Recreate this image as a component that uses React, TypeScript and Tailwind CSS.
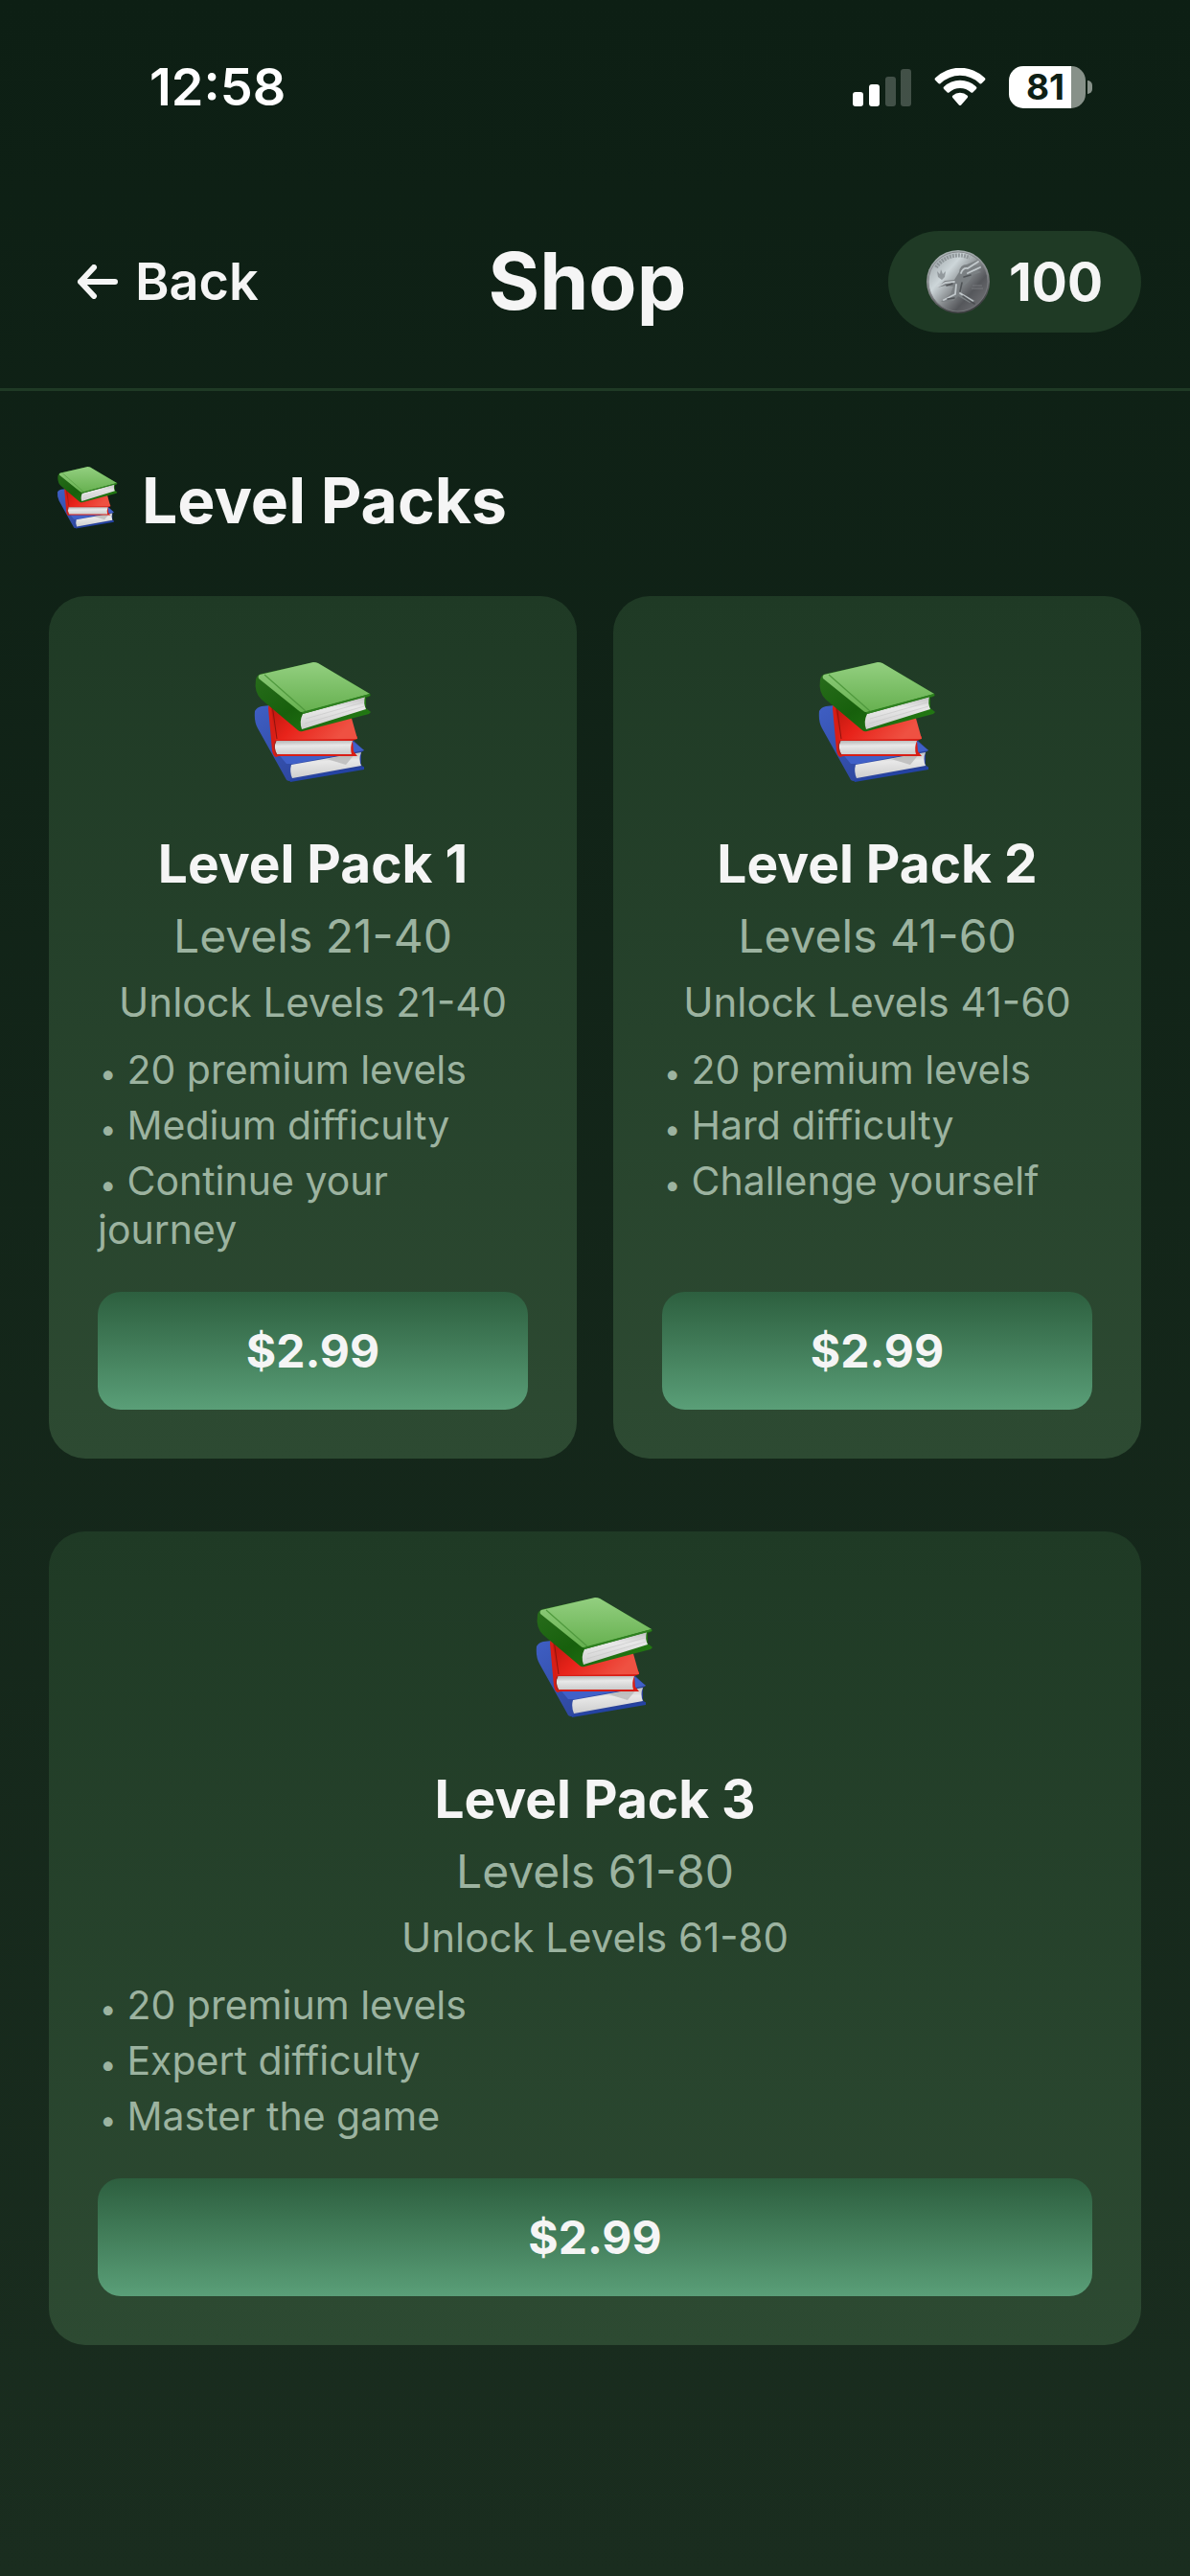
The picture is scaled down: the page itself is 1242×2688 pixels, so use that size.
import React, { useState } from 'react';

const PACKS = [
  { id: 1, title: 'Level Pack 1', range: '21-40', features: ['20 premium levels', 'Medium difficulty', 'Continue your journey'], price: '$2.99' },
  { id: 2, title: 'Level Pack 2', range: '41-60', features: ['20 premium levels', 'Hard difficulty', 'Challenge yourself'], price: '$2.99' },
  { id: 3, title: 'Level Pack 3', range: '61-80', features: ['20 premium levels', 'Expert difficulty', 'Master the game'], price: '$2.99', wide: true },
];

const Books = ({ className }) => (
  <svg className={className} viewBox="0 0 124 126" aria-hidden="true">
    <defs>
      <linearGradient id="greenTop" x1="0.5" y1="0" x2="0.5" y2="1">
        <stop offset="0" stopColor="#93cf80" />
        <stop offset="1" stopColor="#66b04f" />
      </linearGradient>
      <linearGradient id="greenSpine" x1="0" y1="0" x2="1" y2="1">
        <stop offset="0" stopColor="#2c6f1f" />
        <stop offset="0.5" stopColor="#17600c" />
        <stop offset="1" stopColor="#268015" />
      </linearGradient>
      <linearGradient id="redTop" x1="0" y1="0" x2="1" y2="0.4">
        <stop offset="0" stopColor="#b5150b" />
        <stop offset="0.45" stopColor="#e8231a" />
        <stop offset="1" stopColor="#ef5142" />
      </linearGradient>
      <linearGradient id="blueSpine" x1="0" y1="0" x2="1" y2="1">
        <stop offset="0" stopColor="#3f5fc4" />
        <stop offset="1" stopColor="#263c8e" />
      </linearGradient>
      <linearGradient id="pages" x1="0" y1="0" x2="0.1" y2="1">
        <stop offset="0" stopColor="#b4b4b4" />
        <stop offset="0.4" stopColor="#e8e8e8" />
        <stop offset="1" stopColor="#cecece" />
      </linearGradient>
    </defs>

    <path d="M1 51 Q3 47 8 46 L26 44 L102 80 L115 92 L112 94 L112 107 L115 110 L37 124 Q34 124 33 121 L4 69 Q0 62 1 51 Z" fill="url(#blueSpine)" />
    <path d="M24 94 L98 82 L104 83 L115 92 L42 106 L34 106 Z" fill="#4060c8" />
    <path d="M39 107 L112 94 Q109 101 112 108 L40 121 Q37 114 39 107 Z" fill="url(#pages)" />
    <path d="M76 101 L106 95 L96 107 Z" fill="#b2b2b2" opacity="0.7" />
    <path d="M37 123 L115 109 L115 112 L38 125 Z" fill="#2443a4" />

    <path d="M16 39 L90 57 L108 78 L108 80 L103 82 L104 93 L108 98 L26 98 L23 99 Q20 98 19 92 L15 48 Z" fill="#d81e16" />
    <path d="M17 40 L101 55 L108 80 L22 81 Z" fill="url(#redTop)" />
    <path d="M19 44 L24 80" stroke="#8f140e" strokeWidth="1" fill="none" />
    <path d="M23 82 L103 82 Q100 89 102 96 L24 96 Q20 89 23 82 Z" fill="url(#pages)" />
    <path d="M23 82 Q19 89 24 97" stroke="#9c2923" strokeWidth="1.2" fill="none" />

    <path d="M2 18 Q3 13 8 12 L63 0 Q65 0 67 1 L121 33 Q124 35 117 37 L117 48 L122 52 L120 54 L51 72 Q48 73 46 71 L8 39 Q0 32 2 18 Z" fill="url(#greenSpine)" />
    <path d="M6 13 L62 0 Q65 0 67 1 L121 33 L52 52 Q49 53 46 50 L5 17 Q4 14 6 13 Z" fill="url(#greenTop)" />
    <path d="M11 13 L54 51" stroke="#4f993d" strokeWidth="1.2" fill="none" />
    <path d="M51 54 L116 36 Q114 43 117 49 L50 70 Q47 62 51 54 Z" fill="url(#pages)" />
    <path d="M54 59 L114 42 M53 64 L115 46" stroke="#c9c9c9" strokeWidth="0.7" />
    <path d="M50 52 L121 33 L121 35 L51 54 Z" fill="#2f8120" />
  </svg>
);

const Coin = () => (
  <svg className="size-[66px]" viewBox="0 0 66 66" aria-hidden="true">
    <defs>
      <linearGradient id="coinFace" x1="0.1" y1="0.1" x2="0.9" y2="0.8">
        <stop offset="0" stopColor="#a3abae" />
        <stop offset="0.3" stopColor="#cdd6d9" />
        <stop offset="0.58" stopColor="#85898c" />
        <stop offset="0.8" stopColor="#55575b" />
        <stop offset="1" stopColor="#68696d" />
      </linearGradient>
      <linearGradient id="coinRim" x1="0" y1="0" x2="0.3" y2="1">
        <stop offset="0" stopColor="#b4bfc0" />
        <stop offset="0.6" stopColor="#85878a" />
        <stop offset="1" stopColor="#3f4043" />
      </linearGradient>
    </defs>
    <circle cx="33" cy="33" r="33" fill="url(#coinRim)" />
    <circle cx="33" cy="33" r="31" fill="url(#coinFace)" stroke="#7b7e82" strokeWidth="0.8" />
    <path d="M10 18 A28 28 0 0 1 45 8" stroke="#7d8487" strokeWidth="4" strokeDasharray="2 1" fill="none" opacity="0.7" />
    <path d="M11 22 l3 3 l1 -5 l2 5 l3 -3 l-1 6 l-3 3 l-4 -3 Z" fill="#848b8e" opacity="0.8" />
    <path d="M11 39 L19 32 L29 31 L34 23 Q35 15 42 15 L54 10 L50 16 L58 16 L51 20 L57 23 L48 26 Q45 34 37 38 L37 45 L51 53 L45 55 L33 48 L28 53 L15 54 L25 46 L28 38 L20 37 Z" fill="#7b8083" />
    <path d="M12 38 L20 34 L29 33 M36 24 Q38 18 43 19 L54 12 M43 24 L56 18 M31 36 L30 46 L18 52 M35 45 L48 53" stroke="#d3dadd" strokeWidth="1.8" fill="none" strokeLinecap="round" opacity="0.8" />
    <path d="M39 28 L46 26 M37 34 L35 43 M22 51 L29 50 M38 48 L50 56 M21 37 L27 35" stroke="#46494c" strokeWidth="1.6" fill="none" strokeLinecap="round" opacity="0.8" />
    <path d="M48 37 h10 M47 40 h12" stroke="#77797c" strokeWidth="1" />
  </svg>
);

const StatusBar = () => (
  <div className="flex h-[183px] items-start justify-between pt-[59px] pr-[102px] pl-[156px] text-white">
    <span className="text-[54px] leading-[64px] font-semibold">12:58</span>
    <div className="flex h-[64px] items-center gap-6">
      <svg className="h-[40px] w-[61px]" viewBox="0 0 61 40" fill="currentColor" aria-label="Signal">
        <rect x="0" y="25" width="11" height="15" rx="3" />
        <rect x="17" y="17" width="11" height="23" rx="3" />
        <rect x="34" y="9" width="11" height="31" rx="3" opacity="0.22" />
        <rect x="50" y="1" width="11" height="39" rx="3" opacity="0.22" />
      </svg>
      <svg className="h-[40px] w-[54px]" viewBox="0 0 54 40" fill="currentColor" aria-label="Wi-Fi">
        <path d="M1.2 10.2 A37 37 0 0 1 52.8 10.2 Q54 11.4 52.8 12.7 L49.6 16 Q48.5 17 47.3 15.9 A29.5 29.5 0 0 0 6.7 15.9 Q5.5 17 4.4 16 L1.2 12.7 Q0 11.4 1.2 10.2 Z" />
        <path d="M10.2 19.5 A24.3 24.3 0 0 1 43.8 19.5 Q45 20.7 43.8 21.9 L40.5 25.2 Q39.4 26.2 38.2 25.2 A16.8 16.8 0 0 0 15.8 25.2 Q14.6 26.2 13.5 25.2 L10.2 21.9 Q9 20.7 10.2 19.5 Z" />
        <path d="M19.3 28.8 A11.4 11.4 0 0 1 34.7 28.8 Q35.8 29.9 34.7 31 L28.2 38.5 Q27 39.7 25.8 38.5 L19.3 31 Q18.2 29.9 19.3 28.8 Z" />
      </svg>
      <div className="flex items-center gap-[2px]">
        <div className="flex h-[44px] w-[80px] items-center justify-center rounded-[15px] bg-linear-to-r from-white from-81% to-[#879189] to-81% pr-1 text-[37px] leading-[44px] font-bold text-[#0e2015]">81</div>
        <div className="h-[14px] w-[5px] rounded-r-full bg-[#879189]" />
      </div>
    </div>
  </div>
);

const PackCard = ({ pack, onBuy }) => (
  <article className={`flex flex-col rounded-[38px] bg-linear-to-b from-[#1f3a25] to-[#2d4a32] p-[51px] ${pack.wide ? 'col-span-2' : ''}`}>
    <Books className="mt-[18px] h-[126px] w-[124px] self-center" />
    <h3 className="mt-[52px] text-center text-[55px] leading-[64px] font-bold text-[#f5f5f5]">{pack.title}</h3>
    <p className="mt-[15px] text-center text-[48px] leading-[58px]">Levels {pack.range}</p>
    <p className="mt-[14px] text-center text-[42px] leading-[51px]">Unlock Levels {pack.range}</p>
    <ul className="mt-5 flex flex-col gap-[7px] text-[41px] leading-[51px]">
      {pack.features.map(f => (
        <li key={f} className="before:pr-[11px] before:pl-[2px] before:text-[31px] before:leading-none before:content-['•']">{f}</li>
      ))}
    </ul>
    <div className="mt-auto pt-[39px]">
      <button onClick={() => onBuy(pack.id)} className="h-[123px] w-full rounded-[24px] bg-linear-to-b from-[#2d5f3f] to-[#5a9f78] text-[48px] font-bold text-[#f5f5f5]">{pack.price}</button>
    </div>
  </article>
);

export default function ShopScreen() {
  const [coins] = useState(100);
  const [selected, setSelected] = useState(null);

  return (
    <div className="min-h-screen bg-linear-to-b from-[#0d1f14] to-[#1a2d1f] font-['Inter',sans-serif] text-[#9cb3a0]">
      <StatusBar />
      <header className="flex h-[225px] items-center justify-between border-b-[3px] border-[#1f3a25] px-[51px] text-[#f5f5f5]">
        <button className="flex items-center gap-[18px] px-[29px] text-[54px] leading-[64px] font-semibold">
          <svg className="h-[36px] w-[43px]" viewBox="0 0 43 36" fill="none" stroke="currentColor" strokeWidth="6" strokeLinecap="round" strokeLinejoin="round" aria-hidden="true">
            <path d="M40 18 H4 M18 3 L4 18 L18 33" />
          </svg>
          Back
        </button>
        <h1 className="text-[82px] leading-[96px] font-bold">Shop</h1>
        <div className="flex h-[106px] items-center gap-5 rounded-full bg-[#1f3a25] px-[40px] text-[55px] font-bold">
          <Coin />
          <span>{coins}</span>
        </div>
      </header>

      <main className="px-[51px] pt-[72px] pb-[100px]">
        <h2 className="flex items-center gap-[24px] pl-[8px] text-[66px] leading-[84px] font-bold text-[#f5f5f5]">
          <Books className="mb-[6px] size-[65px]" />
          Level Packs
        </h2>
        <div className="mt-[58px] grid grid-cols-2 gap-x-[38px] gap-y-[76px]" data-selected={selected}>
          {PACKS.map(p => <PackCard key={p.id} pack={p} onBuy={setSelected} />)}
        </div>
      </main>
    </div>
  );
}
